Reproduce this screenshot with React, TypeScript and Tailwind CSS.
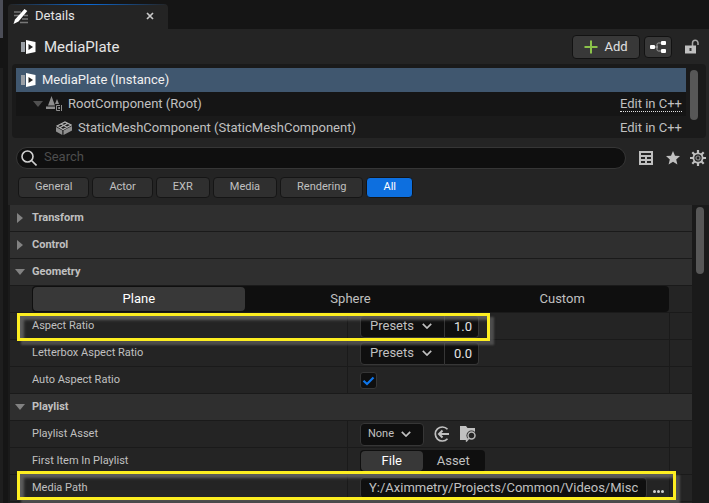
import { useState, type ReactNode } from "react";
import clsx from "clsx";

const filters = ["General", "Actor", "EXR", "Media", "Rendering", "All"];
const shapes = ["Plane", "Sphere", "Custom"];
const sources = ["File", "Asset"];

export default function App() {
  const [filter, setFilter] = useState("All");
  const [shape, setShape] = useState("Plane");
  const [source, setSource] = useState("File");

  return (
    <div className="flex h-screen overflow-hidden bg-[#151515] font-[Roboto,sans-serif] text-[13px] text-[#c0c0c0]">
      <div className="flex w-[3px] shrink-0 flex-col">
        <div className="h-[38px] bg-[#4b4d57]" />
        <div className="h-[30px]" />
        <div className="flex-1 bg-[#1e1e1e]" />
      </div>
      <main className="ml-[5px] flex min-w-0 flex-1 flex-col pt-1">
        <div className="flex h-[25px] w-40 shrink-0 items-center rounded-t bg-[#242424] bg-[linear-gradient(90deg,#242424,#0b6ad8,#242424)] bg-[length:100%_1px] bg-no-repeat pr-3 pl-[5px] text-[#e4e4e4]">
          <DetailsIcon />
          <span className="ml-1.5 pb-0.5">Details</span>
          <button type="button" aria-label="Close tab" className="ml-auto">
            <svg width="12" height="12" viewBox="0 0 12 12" stroke="#c8c8c8" strokeWidth="1.7">
              <path d="M3 2l6 6M9 2l-6 6" />
            </svg>
          </button>
        </div>

        <div className="flex min-h-0 flex-1 flex-col bg-[#242424]">
          <header className="flex h-[35px] shrink-0 items-center pr-2.5 pl-[13px]">
            <PlateIcon />
            <h1 className="ml-2 pt-px text-[15px] text-[#e4e4e4]">MediaPlate</h1>
            <button
              type="button"
              className="ml-auto flex h-6 w-[68px] items-center justify-center gap-1.5 rounded border border-[#121212] bg-[#383838] text-[#e0e0e0]"
            >
              <svg width="14" height="14" viewBox="0 0 14 14" stroke="#8bc24a" strokeWidth="2">
                <path d="M7 0.5v13M0.5 7h13" />
              </svg>
              Add
            </button>
            <button
              type="button"
              aria-label="Edit blueprint"
              className="mr-px ml-1 flex h-[22px] w-7 items-center justify-center rounded border border-[#121212] bg-[#383838]"
            >
              <svg width="18" height="14" viewBox="0 0 18 14" fill="#fff">
                <rect x="1" y="5" width="5" height="4" rx="1" />
                <rect x="12" y="1" width="5" height="4" rx="1" />
                <rect x="12" y="9" width="5" height="4" rx="1" />
                <path d="M6 7h3M12 3H9.500c-.8 0-1.500.5-1.500 1.500v5c0 1 .7 1.500 1.500 1.500H12" fill="none" stroke="#a8a8a8" />
              </svg>
            </button>
            <button type="button" aria-label="Unlock" className="ml-3">
              <svg width="14" height="16" viewBox="0 0 14 16">
                <path d="M7.500 7V4a2.750 2.750 0 0 1 5.500 0V6" fill="none" stroke="#a8a8a8" strokeWidth="1.500" />
                <path d="M0 6.500h11v8H0z" fill="#c0c0c0" />
                <path d="M4.500 9h2v3h-2z" fill="#333" />
              </svg>
            </button>
          </header>

          <section className="mr-[3px] ml-1 flex h-[74px] shrink-0 rounded bg-[#1a1a1a] pt-1 pl-1">
            <div className="min-w-0 flex-1">
              <div className="flex h-6 items-center bg-[#40576f] pl-[5px] text-[#f0f0f0]">
                <PlateIcon />
                <span className="ml-1.5">MediaPlate (Instance)</span>
              </div>
              <div className="flex h-6 items-center bg-[#151515] pr-1 pl-[17px]">
                <Arrow open dim />
                <RootIcon />
                <span className="ml-[5px]">RootComponent (Root)</span>
                <a href="#root-component" className="ml-auto border-b border-dotted border-[#e0e0e0] leading-[14px]">
                  Edit in C++
                </a>
              </div>
              <div className="flex h-6 items-center pr-1 pl-10">
                <MeshIcon />
                <span className="ml-1.5">StaticMeshComponent (StaticMeshComponent)</span>
                <a href="#static-mesh" className="ml-auto">
                  Edit in C++
                </a>
              </div>
            </div>
            <div className="w-5 shrink-0 pt-0.5 pl-1">
              <div className="h-[50px] w-2 rounded-full bg-[#575757]" />
            </div>
          </section>

          <div className="mt-[9px] flex shrink-0 items-center pr-[3px] pl-2">
            <label className="flex h-[22px] min-w-0 flex-1 items-center rounded-full border border-[#363636] bg-[#0f0f0f] pl-1">
              <svg width="16" height="16" viewBox="0 0 16 16" fill="none" stroke="#d0d0d0" strokeWidth="1.6">
                <circle cx="6.500" cy="6.500" r="5.500" />
                <path d="M10.500 10.500l5 5" />
              </svg>
              <input
                aria-label="Search"
                placeholder="Search"
                className="ml-[7px] min-w-0 flex-1 bg-transparent pb-0.5 outline-none placeholder:text-[#4d4d4d]"
              />
            </label>
            <button type="button" aria-label="Property matrix" className="ml-[13px]">
              <svg width="14" height="14" viewBox="0 0 14 14">
                <path d="M0 0h14v14H0z" fill="#c0c0c0" />
                <path d="M2 2h10v2H2zM2 6h4v2H2zM8 6h4v2H8zM2 10h4v2H2zM8 10h4v2H8z" fill="#242424" />
              </svg>
            </button>
            <button type="button" aria-label="Favorites" className="ml-[13px]">
              <svg width="14" height="14" viewBox="0 0 14 14" fill="#c0c0c0">
                <path d="M7 0l2 4.700 5 .4-3.800 3.300 1.200 5L7 10.800l-4.400 2.600 1.200-5L0 5.100l5-.4z" />
              </svg>
            </button>
            <button type="button" aria-label="Settings" className="ml-2.5">
              <GearIcon />
            </button>
          </div>

          <div className="mt-2 mb-[7px] flex shrink-0 gap-[3px] pl-2.5 text-[11px]">
            {filters.map((name) => (
              <button
                key={name}
                type="button"
                onClick={() => setFilter(name)}
                className={clsx(
                  "h-[21px] rounded border border-[#151515] px-4",
                  filter === name ? "bg-[#0d6fdf] text-white" : "bg-[#2f2f2f]"
                )}
              >
                {name}
              </button>
            ))}
          </div>

          <div className="flex min-h-0 flex-1 bg-[#1a1a1a] pl-0.5">
            <div className="min-w-0 flex-1">
              <Category name="Transform" />
              <Category name="Control" />
              <Category name="Geometry" open />
              <div className="flex h-[27px] border-b border-[#1a1a1a] bg-[#242424] pr-[23px] pl-[22px]">
                <div className="grid flex-1 grid-cols-3 rounded bg-[#0f0f0f] p-px">
                  {shapes.map((name) => (
                    <Segment key={name} name={name} selected={shape === name} onSelect={setShape} />
                  ))}
                </div>
              </div>
              <Row
                label="Aspect Ratio"
                htmlFor="aspect"
                highlight={<Highlight className="top-0 h-7 w-[473px]" />}
              >
                <RatioField id="aspect" value="1.0" />
              </Row>
              <Row label="Letterbox Aspect Ratio" htmlFor="letterbox">
                <RatioField id="letterbox" value="0.0" />
              </Row>
              <Row label="Auto Aspect Ratio" htmlFor="auto-aspect">
                <span className="relative flex size-[17px]">
                  <input
                    id="auto-aspect"
                    type="checkbox"
                    defaultChecked
                    className="peer size-full appearance-none rounded-[3px] border border-[#363636] bg-[#0f0f0f]"
                  />
                  <svg
                    viewBox="0 0 17 17"
                    fill="none"
                    stroke="#0f76ea"
                    strokeWidth="2.200"
                    className="pointer-events-none absolute inset-0 hidden peer-checked:block"
                  >
                    <path d="M3.500 8.700l3.500 3.300 6.500-6.500" />
                  </svg>
                </span>
              </Row>
              <Category name="Playlist" open />
              <Row label="Playlist Asset" htmlFor="playlist">
                <Dropdown id="playlist" value="None" className="w-16 rounded border pl-[7px] text-[11px]" />
                <button type="button" aria-label="Use selected asset" className="ml-2.5">
                  <svg width="16" height="16" viewBox="0 0 16 16" fill="none" stroke="#c0c0c0" strokeWidth="1.700">
                    <path d="M13.500 3.300a7 7 0 1 0 0 9.400" />
                    <path d="M15 8H5M8.500 4.500L5 8l3.500 3.500" strokeWidth="2" />
                  </svg>
                </button>
                <button type="button" aria-label="Browse to asset" className="ml-2.5">
                  <svg width="17" height="16" viewBox="0 0 17 16">
                    <path d="M0 0h6l1.500 2H15v4H8v7l-1 1H0z" fill="#c0c0c0" />
                    <circle cx="11.500" cy="9.500" r="5" fill="#242424" />
                    <circle cx="11.500" cy="9.500" r="3.500" fill="none" stroke="#b8b8b8" strokeWidth="1.500" />
                    <path d="M9 12L6 15.500" stroke="#b8b8b8" strokeWidth="1.700" />
                  </svg>
                </button>
              </Row>
              <Row label="First Item In Playlist">
                <div className="grid h-[22px] w-[125px] grid-cols-2 rounded bg-[#0f0f0f] p-px">
                  {sources.map((name) => (
                    <Segment key={name} name={name} selected={source === name} onSelect={setSource} />
                  ))}
                </div>
              </Row>
              <Row
                label="Media Path"
                htmlFor="media-path"
                highlight={<Highlight className="-top-1 right-4 h-[29px]" />}
              >
                <input
                  id="media-path"
                  defaultValue="Y:/Aximmetry/Projects/Common/Videos/Misc"
                  className="h-[22px] min-w-0 flex-1 rounded border border-[#363636] bg-[#0f0f0f] px-2 pb-0.5 outline-none"
                />
                <button type="button" aria-label="Browse" className="mr-[5px] ml-1.5 flex h-[10px] items-end gap-px">
                  <span className="size-[3px] rounded-full bg-[#d0d0d0]" />
                  <span className="size-[3px] rounded-full bg-[#d0d0d0]" />
                  <span className="size-[3px] rounded-full bg-[#d0d0d0]" />
                </button>
              </Row>
              <div className="h-2 bg-[#242424]" />
            </div>
            <div className="w-[17px] shrink-0 pt-0.5 pl-1">
              <div className="h-[67px] w-2 rounded-full bg-[#575757]" />
            </div>
          </div>
        </div>
      </main>
    </div>
  );
}

function Category({ name, open = false }: { name: string; open?: boolean }) {
  return (
    <button
      type="button"
      aria-expanded={open}
      className="flex h-[27px] w-full items-center border-b border-[#1a1a1a] bg-[#2f2f2f] pl-[5px] text-left text-[11px] font-bold"
    >
      <Arrow open={open} />
      <span className="ml-[7px]">{name}</span>
    </button>
  );
}

type RowProps = {
  label: string;
  htmlFor?: string;
  highlight?: ReactNode;
  children: ReactNode;
};

function Row({ label, htmlFor, highlight, children }: RowProps) {
  return (
    <div className="relative flex h-[27px] border-b border-[#1a1a1a] bg-[#242424]">
      <label htmlFor={htmlFor} className="flex w-[337px] shrink-0 items-center pl-[22px] text-[11px]">
        {label}
      </label>
      <div className="flex min-w-0 flex-1 items-center border-l border-[#1a1a1a] pl-3">{children}</div>
      <div className="w-[23px] shrink-0 border-l border-[#1a1a1a]" />
      {highlight}
    </div>
  );
}

function Highlight({ className }: { className: string }) {
  return (
    <div
      className={clsx(
        "pointer-events-none absolute left-[7px] z-10 border-[3px] border-[#fdee21] shadow-[4px_4px_2px_#606060b0,inset_4px_4px_3px_#707070c0]",
        className
      )}
    />
  );
}

type SegmentProps = {
  name: string;
  selected: boolean;
  onSelect: (name: string) => void;
};

function Segment({ name, selected, onSelect }: SegmentProps) {
  return (
    <button
      type="button"
      onClick={() => onSelect(name)}
      className={clsx("rounded", selected && "bg-[#383838] text-white")}
    >
      {name}
    </button>
  );
}

function RatioField({ id, value }: { id: string; value: string }) {
  return (
    <>
      <Dropdown id={`${id}-presets`} value="Presets" className="w-[85px] rounded-l border pl-[9px]" />
      <input
        id={id}
        defaultValue={value}
        className="h-[23px] w-[34px] rounded-r border border-l-0 border-[#363636] bg-[#0f0f0f] pl-[9px] text-[#e4e4e4] outline-none"
      />
    </>
  );
}

function Dropdown({ id, value, className }: { id: string; value: string; className: string }) {
  return (
    <span className="relative flex">
      <select
        id={id}
        aria-label={value}
        className={clsx("h-[23px] appearance-none border-[#363636] bg-[#0f0f0f] outline-none", className)}
      >
        <option>{value}</option>
      </select>
      <svg
        width="10"
        height="6"
        viewBox="0 0 10 6"
        fill="none"
        stroke="#c0c0c0"
        strokeWidth="1.700"
        className="pointer-events-none absolute top-2 right-[13px]"
      >
        <path d="M0.800 0.800L5 5l4.200-4.200" />
      </svg>
    </span>
  );
}

function Arrow({ open = false, dim = false }: { open?: boolean; dim?: boolean }) {
  return (
    <svg width="10" height="10" viewBox="0 0 10 10" fill={dim ? "#505050" : "#828282"} className="shrink-0">
      <path d={open ? "M0 2h10L5 8z" : "M2 0v10l6-5z"} />
    </svg>
  );
}

function DetailsIcon() {
  return (
    <svg width="16" height="16" viewBox="0 0 16 16" className="shrink-0">
      <path d="M1 3h7M1 6.500h5M11 6.500h4M9 10h6M7 13.500h8" stroke="#777" strokeWidth="1.300" />
      <path d="M11.500 0l2.800 2L5.500 12.500 0.500 15 2 10.500z" fill="#fff" />
    </svg>
  );
}

function PlateIcon() {
  return (
    <svg width="15" height="14" viewBox="0 0 15 14" className="shrink-0">
      <path d="M0 2h4v10H0z" fill="#9a9fa5" />
      <path d="M5 0l9.500 2v10L5 14z" fill="#fff" />
      <path d="M7.500 4v6l4.500-3z" fill="#242424" />
    </svg>
  );
}

function RootIcon() {
  return (
    <svg width="17" height="16" viewBox="0 0 17 16" className="ml-[3px] shrink-0">
      <path d="M5.500 0l3.500 9.500H2zM11 3l2 5H9z" fill="#8e8e8e" />
      <path d="M0 10.500h9v2.500H0z" fill="#8e8e8e" />
      <path d="M14 9.500h-3.500v5H14M16 9.500h-1M16 14.500h-1M15.500 9v6" fill="none" stroke="#8e8e8e" />
      <path d="M14 11.500h-1.500v1H14" fill="none" stroke="#8e8e8e" />
    </svg>
  );
}

function MeshIcon() {
  return (
    <svg width="16" height="14" viewBox="0 0 16 14" className="shrink-0">
      <path d="M1 5l8-4 6 3-8 4.500zM5 3l6 3.200M11.500 2.500L4 6.500" fill="none" stroke="#b4b4b4" strokeWidth="1.200" />
      <path d="M0 6l6.300 3.500V14L0 10.500zM7.500 9.500L16 5v4.500L7.500 14z" fill="#8e8e8e" />
    </svg>
  );
}

function GearIcon() {
  return (
    <svg width="16" height="16" viewBox="0 0 16 16" fill="none" stroke="#c0c0c0">
      <circle cx="8" cy="8" r="4.600" strokeWidth="1.800" />
      <circle cx="8" cy="8" r="2" stroke="#8e8e8e" strokeWidth="1.200" />
      <path
        d="M8 0v3M8 13v3M0 8h3M13 8h3M2.300 2.300l2.200 2.200M11.500 11.500l2.200 2.200M2.300 13.700l2.200-2.200M11.500 4.500l2.200-2.200"
        strokeWidth="2.200"
      />
    </svg>
  );
}
